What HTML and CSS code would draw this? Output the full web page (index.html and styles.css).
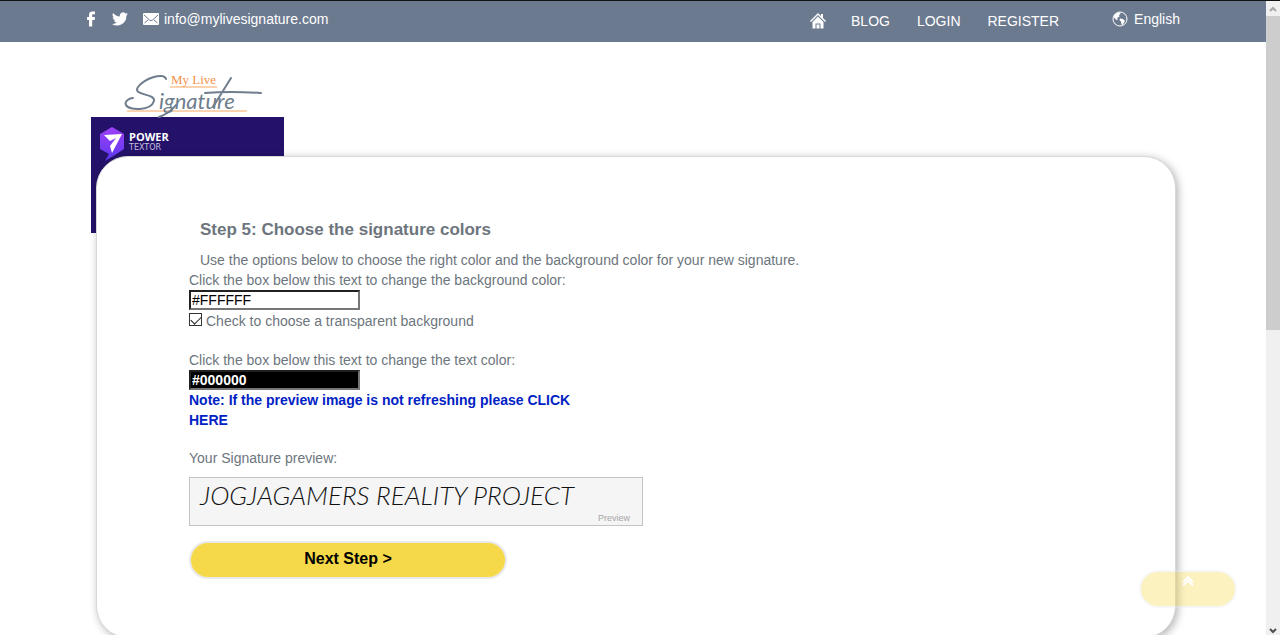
FILE: index.html
```html
<!DOCTYPE html>
<html lang="en">
<head>
<meta charset="utf-8">
<title>My Live Signature</title>
<link rel="stylesheet" href="styles.css">
</head>
<body>
<div class="page">
  <header class="topbar">
    <div class="contact">
      <a class="icon-link" href="#" aria-label="Facebook"><svg width="10" height="16" viewBox="0 0 10 16"><path d="M3 15.500V9H1V6h2V4.200C3 1.600 4.300.5 6.400.5H9v2.700H7.300C6.400 3.200 6.200 3.600 6.200 4.400V6H9l-.4 3H6.200v6.500z"/></svg></a>
      <a class="icon-link twitter" href="#" aria-label="Twitter"><svg width="16" height="14" viewBox="0 0 24 20"><path d="M24 2.400a10 10 0 0 1-2.800.8A5 5 0 0 0 23.300.5a10 10 0 0 1-3.100 1.200A4.900 4.900 0 0 0 11.800 6.200 14 14 0 0 1 1.700 1a4.900 4.900 0 0 0 1.500 6.600A5 5 0 0 1 1 7c0 2.300 1.600 4.400 3.900 4.900a5 5 0 0 1-2.200.1 4.900 4.900 0 0 0 4.600 3.400A10 10 0 0 1 0 17.500 14 14 0 0 0 21.500 5z"/></svg></a>
      <a class="mail" href="#"><svg width="16" height="12" viewBox="0 0 16 12"><rect width="16" height="12" rx="1"/><path class="crease" d="M1 2l5.500 5q1.500 1.200 3 0L15 2M1.500 10l3.500-3M14.500 10L11 7"/></svg>info@mylivesignature.com</a>
    </div>
    <nav class="menu">
      <a href="#" aria-label="Home"><svg width="16" height="16" viewBox="0 0 16 16"><path d="M8 0L0 8l1 1 7-7 7 7 1-1-3-3V1h-2v2z"/><path d="M2.500 9L8 3.500 13.500 9v6.500H10.500V10.500h-5v5h-3zM6.500 11.500h3v4h-3z"/></svg></a>
      <a href="#">BLOG</a>
      <a href="#">LOGIN</a>
      <a href="#">REGISTER</a>
    </nav>
    <a class="language" href="#"><svg width="16" height="16" viewBox="0 0 16 16"><circle class="globe" cx="8" cy="8" r="7"/><path d="M2 4.500L5 2l3-.5.500 1.500-1.500 1 .5 1.500L5 7l1 1.500-1.500.5L2 6.500zM8 7.500l3 .5 2 2-1 1.500-1.500 2.500-1-.5-.5-3L7.500 9z"/></svg>English</a>
  </header>

  <a class="logo" href="#" aria-label="My Live Signature">
    <svg width="140" height="48" viewBox="0 0 140 48">
      <path class="rule" d="M46 17H93M3 41H123"/>
      <path class="swash" d="M42 9C40 2 21 8 14 17C8 26 32 23 30 31C27 41 5 41 2 35C0 31 6 28 9 28M89 37L107 8M81 23Q105 21 137 23M52 35Q46 43 35 47"/>
      <text class="logo-script" x="35" y="39">ignature</text>
      <text class="logo-name" x="47" y="14">My Live</text>
    </svg>
  </a>

  <aside class="banner">
    <svg width="26" height="34" viewBox="0 0 26 34">
      <defs><linearGradient id="violet" x1="0" y1="0" x2="0" y2="1"><stop offset="0" stop-color="#a040f8"/><stop offset="1" stop-color="#5a38ee"/></linearGradient></defs>
      <path fill="url(#violet)" d="M13 0L25 7V22L16 28 6 34 10 27 1 22V7z"/>
      <path fill="#fff" d="M5 8l18-1-10 19-2-7 6-8-6 3z"/>
    </svg>
    <div class="brand"><strong>POWER</strong><span>TEXTOR</span></div>
  </aside>

  <main class="card">
    <form class="step">
      <h1>Step 5: Choose the signature colors</h1>
      <p class="intro">Use the options below to choose the right color and the background color for your new signature.</p>
      <label class="line" for="bg">Click the box below this text to change the background color:</label>
      <input class="color" id="bg" type="text" value="#FFFFFF">
      <div class="check">
        <input id="transparent" type="checkbox" checked>
        <label for="transparent">Check to choose a transparent background</label>
      </div>
      <label class="line" for="fg">Click the box below this text to change the text color:</label>
      <input class="color dark" id="fg" type="text" value="#000000">
      <a class="note" href="#">Note: If the preview image is not refreshing please CLICK HERE</a>
      <p class="caption">Your Signature preview:</p>
      <div class="preview">
        <span class="signature">JOGJAGAMERS REALITY PROJECT</span>
        <span class="tag">Preview</span>
      </div>
      <button class="next" type="button">Next Step &gt;</button>
    </form>
  </main>
</div>

<button class="to-top" type="button" aria-label="Back to top"><svg width="12" height="10" viewBox="0 0 12 10"><path d="M1 6l5-5 5 5M1 9.500l5-5 5 5"/></svg></button>

<div class="scrollbar">
  <svg width="8" height="6" viewBox="0 0 8 6"><path class="idle" d="M1 5l3-3 3 3"/></svg>
  <div class="thumb"></div>
  <svg width="8" height="6" viewBox="0 0 8 6"><path d="M1 1l3 3 3-3"/></svg>
</div>
</body>
</html>
```
FILE: styles.css
```css
* { box-sizing: border-box; }

body {
  margin: 0;
  height: 100vh;
  overflow: hidden;
  display: flex;
  background: #fff;
  color: #6d757d;
  font: 14px/20px "Liberation Sans", Arial, sans-serif;
}

a { color: inherit; text-decoration: none; }
svg { display: block; flex: none; }
h1, p { margin: 0; }

.page { flex: 1; min-width: 0; }

.topbar {
  display: flex;
  align-items: flex-start;
  height: 42px;
  padding: 0 86px;
  border-top: 1px solid #111;
  background: #6c7a90;
  color: #fff;
}
.topbar svg { fill: #fff; }
.contact { display: flex; align-items: center; padding-top: 8px; }
.twitter { margin: 0 15px 0 16px; }
.mail, .language { display: flex; align-items: center; gap: 5px; }
.crease { fill: none; stroke: #6c7a90; }
.menu { display: flex; align-items: center; gap: 27px; margin-left: auto; padding-top: 10px; }
.menu a:first-child { margin-right: -2px; }
.language { gap: 6px; margin-left: 53px; padding-top: 8px; }
.topbar .globe { fill: none; stroke: #fff; }

.logo { display: block; width: 140px; margin: 28px 0 0 124px; }
.rule { stroke: #fbd3ae; stroke-width: 2; }
.swash { fill: none; stroke: #6f7d8c; stroke-width: 2; stroke-linecap: round; }
.logo-script { font: italic 22px Lato, sans-serif; fill: #6f7d8c; }
.logo-name { font: 13px "Liberation Serif", serif; fill: #f5924a; }

.banner {
  display: flex;
  align-items: flex-start;
  gap: 4px;
  width: 193px;
  height: 116px;
  margin: -1px 0 -77px 91px;
  padding: 10px 8px;
  background: #24126a;
  color: #fff;
}
.brand { display: flex; flex-direction: column; gap: 1px; padding-top: 3px; }
.brand strong { font: bold 11px/13px "Open Sans", sans-serif; }
.brand span { font: 8px/8px "DejaVu Sans", sans-serif; color: #c5bedf; }

.card {
  position: relative;
  margin: 0 90px 0 96px;
  padding: 61px 92px 58px;
  border: 1px solid #d8d8d8;
  border-radius: 32px;
  background: #fff;
  box-shadow: 2px 2px 8px rgba(0, 0, 0, .3);
}
.step { display: flex; flex-direction: column; align-items: flex-start; }
h1 { margin: 0 0 8px 11px; font-size: 17px; line-height: 24px; }
.intro { margin-left: 11px; }
.color {
  width: 171px;
  height: 20px;
  padding: 0 1px 1px;
  border: 2px inset #767676;
  background: #fff;
  color: #000;
  font: inherit;
}
.color.dark { background: #000; color: #fff; font-weight: bold; }
.check { display: flex; align-items: center; gap: 4px; margin: 1px 0 19px; }
.check input {
  appearance: none;
  width: 13px;
  height: 13px;
  margin: 0 0 3px;
  border: 1px solid #333;
  background: #fff;
}
.check input:checked::after {
  content: "";
  display: block;
  width: 9px;
  height: 5px;
  margin: 2px 0 0 1px;
  border: solid #222;
  border-width: 0 0 1px 1px;
  transform: rotate(-45deg);
}
.note { max-width: 400px; color: #0022c4; font-weight: bold; }
.caption { margin-top: 18px; }
.preview {
  display: flex;
  flex-direction: column;
  width: 454px;
  max-width: 100%;
  height: 49px;
  margin-top: 9px;
  padding: 0 12px 0 10px;
  border: 1px solid #c4c4c4;
  background: #f5f5f5;
}
.signature { color: #111; font: italic 300 26px/34px Lato, cursive; white-space: nowrap; }
.tag { align-self: flex-end; color: #a5a5a5; font-size: 9px; line-height: 12px; }
.next {
  width: 318px;
  height: 38px;
  margin-top: 15px;
  padding: 0 0 3px;
  border: 2px solid #e9e9e9;
  border-radius: 19px;
  background: #f5d949;
  color: #000;
  font: bold 16px "Liberation Sans", Arial, sans-serif;
}

.to-top {
  position: fixed;
  right: 43px;
  bottom: 27px;
  display: flex;
  justify-content: center;
  width: 98px;
  height: 38px;
  padding: 4px 0 0;
  border: 2px solid #e9e9e9;
  border-radius: 19px;
  background: #f5d949;
  opacity: .35;
}
.to-top path { fill: none; stroke: #fff; stroke-width: 2; }

.scrollbar {
  display: flex;
  flex-direction: column;
  align-items: center;
  width: 14px;
  padding: 5px 0 1px;
  border-top: 1px solid #111;
  background: #f0f0f0;
}
.scrollbar path { fill: none; stroke: #505050; stroke-width: 2; }
.scrollbar .idle { stroke: #a8a8a8; }
.thumb { width: 100%; height: 50%; margin: 4px 0 auto; background: #cdcdcd; }
```
